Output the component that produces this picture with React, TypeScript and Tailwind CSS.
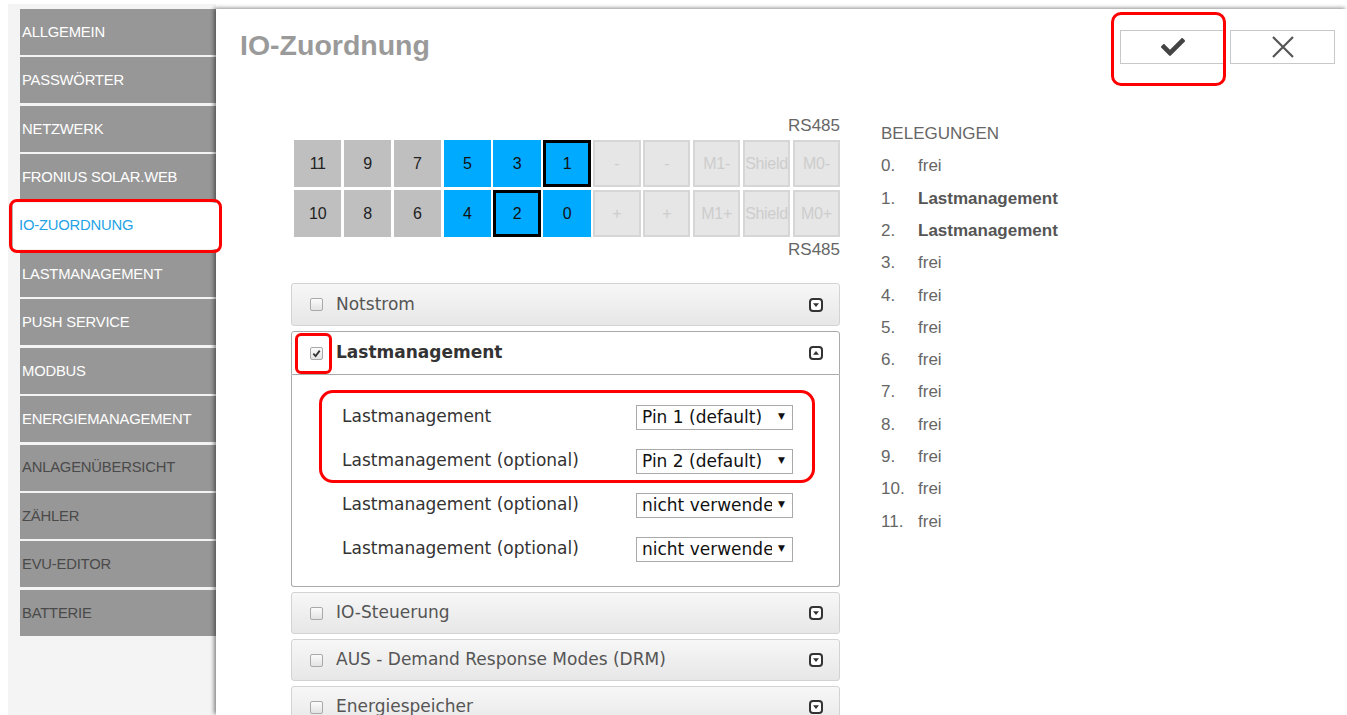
import { FaCheck } from "react-icons/fa"

const navItems = [
  { label: "ALLGEMEIN", dim: false },
  { label: "PASSWÖRTER", dim: false },
  { label: "NETZWERK", dim: false },
  { label: "FRONIUS SOLAR.WEB", dim: false },
  { label: "IO-ZUORDNUNG", dim: false, active: true },
  { label: "LASTMANAGEMENT", dim: false },
  { label: "PUSH SERVICE", dim: false },
  { label: "MODBUS", dim: false },
  { label: "ENERGIEMANAGEMENT", dim: false },
  { label: "ANLAGENÜBERSICHT", dim: true },
  { label: "ZÄHLER", dim: true },
  { label: "EVU-EDITOR", dim: true },
  { label: "BATTERIE", dim: true },
]

const pinRows = [
  ["11", "9", "7", "5", "3", "1", "-", "-", "M1-", "Shield", "M0-"],
  ["10", "8", "6", "4", "2", "0", "+", "+", "M1+", "Shield", "M0+"],
]

// pin currently assigned per row (index into the row)
const selectedPins = [5, 4]

const assignments = [
  "frei",
  "Lastmanagement",
  "Lastmanagement",
  "frei",
  "frei",
  "frei",
  "frei",
  "frei",
  "frei",
  "frei",
  "frei",
  "frei",
]

const loadRows = [
  { label: "Lastmanagement", value: "Pin 1 (default)" },
  { label: "Lastmanagement (optional)", value: "Pin 2 (default)" },
  { label: "Lastmanagement (optional)", value: "nicht verwendet" },
  { label: "Lastmanagement (optional)", value: "nicht verwendet" },
]

function Checkbox({ checked = false }: { checked?: boolean }) {
  return (
    <span className="flex h-[13px] w-[13px] shrink-0 items-center justify-center rounded-[2px] border border-[#a9a9a9] bg-linear-to-b from-[#fbfbfb] to-[#e3e3e3]">
      {checked && (
        <svg width="9" height="9" viewBox="0 0 10 10">
          <path d="M1.5 5.2 L4 7.8 L8.6 1.8" fill="none" stroke="#333" strokeWidth="2" />
        </svg>
      )}
    </span>
  )
}

function ToggleIcon({ open = false }: { open?: boolean }) {
  return (
    <svg width="14" height="14" viewBox="0 0 14 14" className="shrink-0">
      <rect x="1" y="1" width="12" height="12" rx="3" fill="#fff" stroke="#333" strokeWidth="2" />
      {open ? <polygon points="4,8.8 10,8.8 7,5" fill="#333" /> : <polygon points="4,5.2 10,5.2 7,9" fill="#333" />}
    </svg>
  )
}

function AccordionHeader({ title }: { title: string }) {
  return (
    <div className="mt-[5px] flex h-[42px] items-center rounded-[3px] border border-[#d3d3d3] bg-linear-to-b from-[#f7f7f7] to-[#e7e7e7] pl-[18px] pr-[16px]">
      <Checkbox />
      <span className="ml-[13px] flex-1 text-[17px] text-[#555]">{title}</span>
      <ToggleIcon />
    </div>
  )
}

function PinSelect({ value }: { value: string }) {
  return (
    <div className="flex h-[25px] w-[157px] items-center border border-[#a9a9a9] bg-white pl-[5px] pr-[7px]">
      <span className="min-w-0 flex-1 overflow-hidden whitespace-nowrap text-[17px] leading-none text-[#111]">{value}</span>
      <span className="ml-[6px] shrink-0 text-[9px] text-[#111]">▼</span>
    </div>
  )
}

function LoadRow({ label, value }: { label: string; value: string }) {
  return (
    <div className="flex h-[44px] items-center">
      <span className="w-[294px] text-[17px] text-[#333]">{label}</span>
      <PinSelect value={value} />
    </div>
  )
}

export default function App() {
  return (
    <div className="relative flex h-[715px] overflow-hidden bg-white pt-[4px] font-['Liberation_Sans',Arial,sans-serif]">
      {/* Sidebar */}
      <div className="ml-2 w-[208px] shrink-0 bg-[#f4f4f4] pl-3 pt-[5px]">
        <div className="flex flex-col gap-[2.4px]">
          {navItems.map((item) =>
            item.active ? (
              <div
                key={item.label}
                className="relative -ml-2 flex h-[46px] items-center border-l border-[#b5b5b5] bg-white pl-[6px] text-[14.8px] tracking-[-0.2px] text-[#1fa3e6]"
              >
                {item.label}
                <div className="absolute -bottom-[4px] -left-[4px] -right-[6px] -top-[4px] z-10 rounded-[8px] border-[3px] border-[#ff0000]" />
              </div>
            ) : (
              <div
                key={item.label}
                className={`flex h-[46px] items-center bg-[#979797] pl-[2px] text-[14.8px] tracking-[-0.2px] ${
                  item.dim ? "text-[#4a4a4a]" : "text-white"
                }`}
              >
                {item.label}
              </div>
            )
          )}
        </div>
      </div>

      {/* Main panel */}
      <div className="mt-[5px] flex flex-1 flex-col bg-white shadow-[-2px_-1px_4px_rgba(0,0,0,0.45)]">
        <div className="flex items-start pl-6 pr-3 pt-[21px]">
          <h1 className="h-[30px] flex-1 text-[28.5px] font-bold leading-[30px] text-[#9a9a9a]">IO-Zuordnung</h1>
          <div className="relative">
            <button className="flex h-[34px] w-[105px] items-center justify-center border border-[#c8c8c8] bg-white text-[#444]">
              <FaCheck size={24} />
            </button>
            <div className="absolute -bottom-[22px] -left-[9px] -right-[1px] -top-[18px] rounded-[10px] border-[3px] border-[#ff0000]" />
          </div>
          <button className="ml-[5px] flex h-[34px] w-[105px] items-center justify-center border border-[#c8c8c8] bg-white">
            <svg width="24" height="24" viewBox="0 0 24 24">
              <path d="M2 2 L22 22 M22 2 L2 22" stroke="#555" strokeWidth="2.2" />
            </svg>
          </button>
        </div>

        <div className="mt-[53px] flex pl-[75px]">
          {/* Pins and functions */}
          <div className="w-[549px]">
            <div className="h-[18px] text-right text-[17px] leading-[18px] text-[#666]">RS485</div>
            <div className="ml-[3px] mt-[5px] flex flex-col gap-[3px]">
              {pinRows.map((row, r) => (
                <div key={r} className="flex gap-[2.5px]">
                  {row.map((pin, i) => {
                    const tone =
                      i < 3
                        ? "bg-[#bfbfbf] text-[#222]"
                        : i < 6
                          ? "bg-[#00aaff] text-[#111]"
                          : "border-2 border-[#d6d6d6] bg-[#e6e6e6] text-[#cdcdcd]"
                    const picked = selectedPins[r] === i ? "border-[3px] border-black" : ""
                    return (
                      <div
                        key={i}
                        className={`flex h-[47px] w-[47.5px] items-center justify-center text-[16px] tracking-[-0.3px] ${tone} ${picked}`}
                      >
                        {pin}
                      </div>
                    )
                  })}
                </div>
              ))}
            </div>
            <div className="mt-[4px] h-[18px] text-right text-[17px] leading-[18px] text-[#666]">RS485</div>

            <div className="mt-[24px] font-['DejaVu_Sans',Verdana,sans-serif]">
              <div className="flex h-[43px] items-center rounded-[3px] border border-[#d3d3d3] bg-linear-to-b from-[#f7f7f7] to-[#e7e7e7] pl-[18px] pr-[16px]">
                <Checkbox />
                <span className="ml-[13px] flex-1 text-[17px] text-[#555]">Notstrom</span>
                <ToggleIcon />
              </div>

              <div className="mt-[5px] flex h-[44px] items-center rounded-t-[3px] border border-[#aaa] bg-white pl-[18px] pr-[16px]">
                <div className="relative">
                  <Checkbox checked />
                  <div className="absolute -bottom-[14px] -left-[15px] -right-[9px] -top-[14px] rounded-[6px] border-[3px] border-[#ff0000]" />
                </div>
                <span className="ml-[13px] flex-1 text-[17px] font-bold text-[#333]">Lastmanagement</span>
                <ToggleIcon open />
              </div>
              <div className="rounded-b-[3px] border border-t-0 border-[#aaa] bg-white pb-[15px] pl-[50px] pt-[20px]">
                <div className="relative">
                  {loadRows.slice(0, 2).map((row, i) => (
                    <LoadRow key={i} {...row} />
                  ))}
                  <div className="absolute -left-[23px] -top-[5px] bottom-0 w-[496px] rounded-[14px] border-[3px] border-[#ff0000]" />
                </div>
                {loadRows.slice(2).map((row, i) => (
                  <LoadRow key={i} {...row} />
                ))}
              </div>

              <AccordionHeader title="IO-Steuerung" />
              <AccordionHeader title="AUS - Demand Response Modes (DRM)" />
              <AccordionHeader title="Energiespeicher" />
            </div>
          </div>

          {/* Assignment overview */}
          <div className="ml-[41px] text-[17px] text-[#666]">
            <div className="mt-[1px] flex h-[32px] items-center">BELEGUNGEN</div>
            {assignments.map((a, i) => (
              <div key={i} className="flex h-[32.3px] items-center">
                <span className="w-[37px]">{i}.</span>
                <span className={a === "frei" ? "" : "font-bold text-[#555]"}>{a}</span>
              </div>
            ))}
          </div>
        </div>
      </div>
    </div>
  )
}
